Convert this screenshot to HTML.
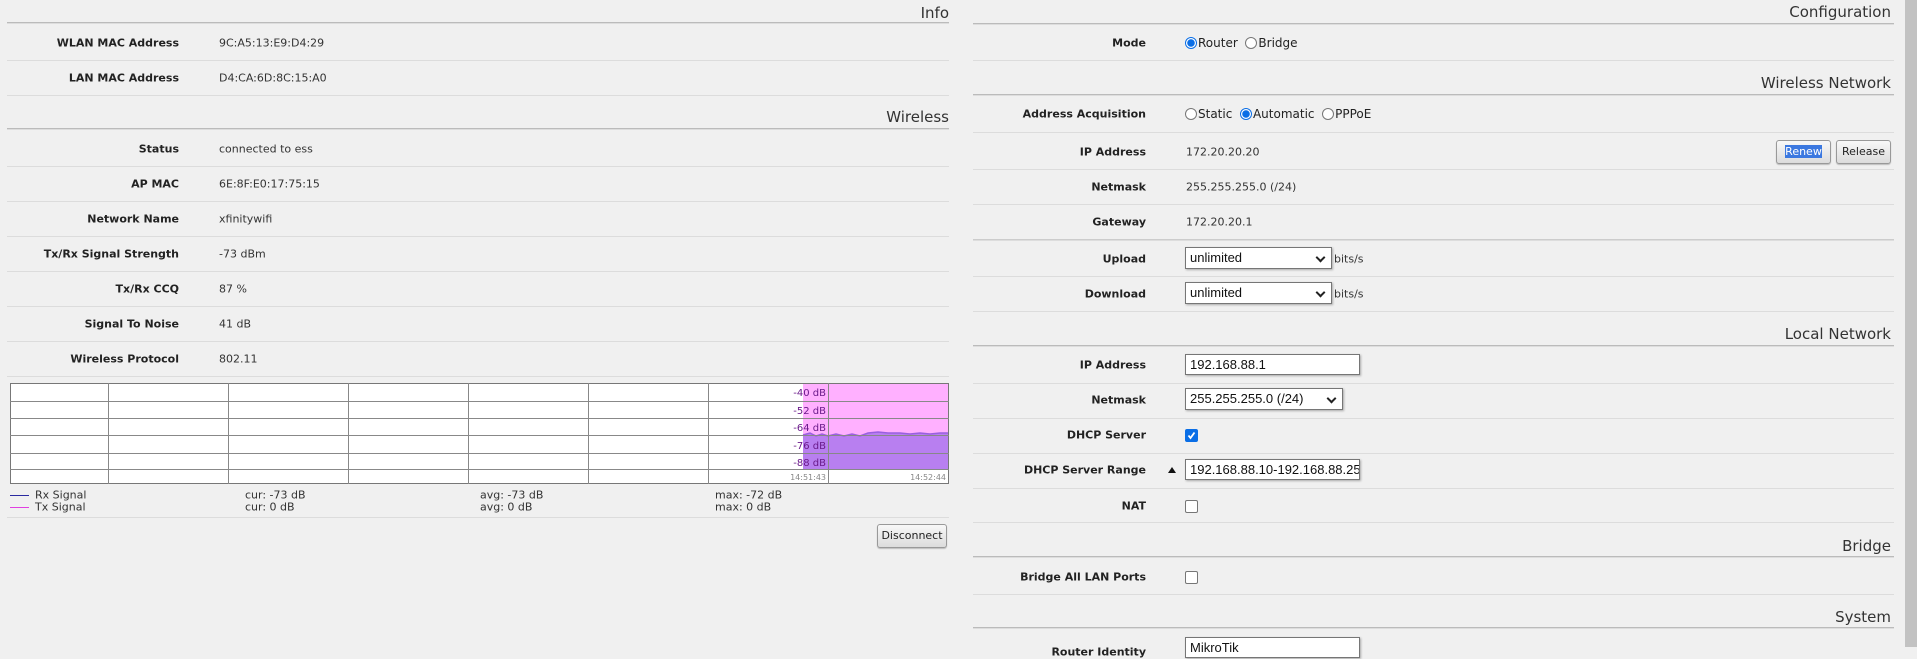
<!DOCTYPE html>
<html><head><meta charset="utf-8"><style>
*{margin:0;padding:0;box-sizing:border-box}
body{width:1917px;height:647px;background:#f0f0f0;position:relative;overflow:hidden;font-family:"DejaVu Sans","Liberation Sans",sans-serif;color:#222}
.a{position:absolute}
.lb{position:absolute;font-weight:bold;font-size:11px;text-align:right;white-space:nowrap;transform:translateY(-50%)}
.v{position:absolute;font-size:11px;white-space:nowrap;transform:translateY(-50%);color:#333}
.h{position:absolute;font-size:15px;text-align:right;white-space:nowrap;transform:translateY(-50%);color:#333}
.hl{position:absolute;height:2px;border-top:1px solid #bbb;border-bottom:1px solid #ddd}
.sl{position:absolute;height:1px;background:#dcdcdc}
.rb{display:inline-block;width:12px;height:12px;border-radius:50%;border:1px solid #777;background:#fff;vertical-align:-2px;margin-right:1px}
.rb.on{border:1px solid #0a6ee6;background:radial-gradient(circle,#0a6ee6 0 3.5px,#fff 4px)}
.opt{position:absolute;font-size:12px;white-space:nowrap;transform:translateY(-50%);color:#222}
.sel,.inp{position:absolute;background:#fff;border:1px solid #767676;box-shadow:1px 1px 2px #aaa;font-family:"Liberation Sans",sans-serif;font-size:13px;padding-left:4px;line-height:20px;color:#111;white-space:nowrap;overflow:hidden}
.sel::after{content:"";position:absolute;right:7px;top:6px;width:5px;height:5px;border-right:2px solid #222;border-bottom:2px solid #222;transform:rotate(45deg)}
.cb{position:absolute;width:13px;height:13px;border:1px solid #767676;border-radius:2px;background:#fff}
.btn{position:absolute;border:1px solid #999;border-radius:3px;background:linear-gradient(#f8f8f8,#dcdcdc);font-size:11px;text-align:center;color:#222;box-shadow:0 1px 1px #bbb}
</style></head><body>
<div class="h" style="right:968px;top:13px">Info</div>
<div class="hl" style="left:7px;width:942px;top:22px"></div>
<div class="lb" style="right:1738px;top:43px">WLAN MAC Address</div><div class="v" style="left:219px;top:43px">9C:A5:13:E9:D4:29</div>
<div class="sl" style="left:7px;width:942px;top:60px"></div>
<div class="lb" style="right:1738px;top:78px">LAN MAC Address</div><div class="v" style="left:219px;top:78px">D4:CA:6D:8C:15:A0</div>
<div class="sl" style="left:7px;width:942px;top:95px"></div>
<div class="h" style="right:968px;top:117px">Wireless</div>
<div class="hl" style="left:7px;width:942px;top:128px"></div>
<div class="lb" style="right:1738px;top:149px">Status</div><div class="v" style="left:219px;top:149px">connected to ess</div>
<div class="sl" style="left:7px;width:942px;top:166px"></div>
<div class="lb" style="right:1738px;top:184px">AP MAC</div><div class="v" style="left:219px;top:184px">6E:8F:E0:17:75:15</div>
<div class="sl" style="left:7px;width:942px;top:201px"></div>
<div class="lb" style="right:1738px;top:219px">Network Name</div><div class="v" style="left:219px;top:219px">xfinitywifi</div>
<div class="sl" style="left:7px;width:942px;top:236px"></div>
<div class="lb" style="right:1738px;top:254px">Tx/Rx Signal Strength</div><div class="v" style="left:219px;top:254px">-73 dBm</div>
<div class="sl" style="left:7px;width:942px;top:271px"></div>
<div class="lb" style="right:1738px;top:289px">Tx/Rx CCQ</div><div class="v" style="left:219px;top:289px">87 %</div>
<div class="sl" style="left:7px;width:942px;top:306px"></div>
<div class="lb" style="right:1738px;top:324px">Signal To Noise</div><div class="v" style="left:219px;top:324px">41 dB</div>
<div class="sl" style="left:7px;width:942px;top:341px"></div>
<div class="lb" style="right:1738px;top:359px">Wireless Protocol</div><div class="v" style="left:219px;top:359px">802.11</div>
<div class="sl" style="left:7px;width:942px;top:376px"></div>
<svg class="a" style="left:10px;top:383px" width="940" height="102" viewBox="0 0 940 102">
<rect x="0.5" y="0.5" width="938" height="100" fill="#fff" stroke="#777"/>
<rect x="793" y="1" width="145" height="85" fill="#ffb0ff"/>
<path d="M793 87 L793 52 L800 50 L806 53 L812 51 L818 53 L826 51 L834 53 L842 51 L850 53 L858 50 L868 49 L878 50 L890 50 L900 51 L910 50 L920 51 L930 50 L938 50 L938 87 Z" fill="#b87ff0"/>
<path d="M793 52 L800 50 L806 53 L812 51 L818 53 L826 51 L834 53 L842 51 L850 53 L858 50 L868 49 L878 50 L890 50 L900 51 L910 50 L920 51 L930 50 L938 50" fill="none" stroke="#9a5fe0" stroke-width="1.5"/>
<g stroke="#888" stroke-width="1">
<line x1="0" y1="18.5" x2="939" y2="18.5"/><line x1="0" y1="35.5" x2="939" y2="35.5"/><line x1="0" y1="52.5" x2="939" y2="52.5"/><line x1="0" y1="70.5" x2="939" y2="70.5"/><line x1="0" y1="86.5" x2="939" y2="86.5"/>
<line x1="98.5" y1="0" x2="98.5" y2="101"/><line x1="218.5" y1="0" x2="218.5" y2="101"/><line x1="338.5" y1="0" x2="338.5" y2="101"/><line x1="458.5" y1="0" x2="458.5" y2="101"/><line x1="578.5" y1="0" x2="578.5" y2="101"/><line x1="698.5" y1="0" x2="698.5" y2="101"/><line x1="818.5" y1="0" x2="818.5" y2="101"/>
</g>
<g font-family="DejaVu Sans,sans-serif" font-size="10" fill="#6a1a8a" text-anchor="end">
<text x="816" y="13">-40 dB</text><text x="816" y="31">-52 dB</text><text x="816" y="48">-64 dB</text><text x="816" y="66">-76 dB</text><text x="816" y="83">-88 dB</text>
</g>
<g font-family="DejaVu Sans,sans-serif" font-size="8" fill="#888" text-anchor="end"><text x="816" y="97">14:51:43</text><text x="936" y="97">14:52:44</text></g>
</svg>
<div class="a" style="left:10px;top:495px;width:19px;height:1px;background:#2a2aa0"></div>
<div class="a" style="left:10px;top:507px;width:19px;height:1px;background:#e040e0"></div>
<div class="v" style="left:35px;top:495px">Rx Signal</div><div class="v" style="left:35px;top:507px">Tx Signal</div>
<div class="v" style="left:245px;top:495px">cur: -73 dB</div><div class="v" style="left:245px;top:507px">cur: 0 dB</div>
<div class="v" style="left:480px;top:495px">avg: -73 dB</div><div class="v" style="left:480px;top:507px">avg: 0 dB</div>
<div class="v" style="left:715px;top:495px">max: -72 dB</div><div class="v" style="left:715px;top:507px">max: 0 dB</div>
<div class="sl" style="left:7px;width:942px;top:517px"></div>
<div class="btn" style="left:877px;top:524px;width:70px;height:24px;line-height:22px">Disconnect</div>

<div class="h" style="right:26px;top:12px">Configuration</div>
<div class="hl" style="left:973px;width:921px;top:23px"></div>
<div class="lb" style="right:771px;top:43px">Mode</div>
<div class="opt" style="left:1185px;top:43px"><span class="rb on"></span>Router&nbsp; <span class="rb"></span>Bridge</div>
<div class="sl" style="left:973px;width:921px;top:60px"></div>
<div class="h" style="right:26px;top:83px">Wireless Network</div>
<div class="hl" style="left:973px;width:921px;top:94px"></div>
<div class="lb" style="right:771px;top:114px">Address Acquisition</div>
<div class="opt" style="left:1185px;top:114px"><span class="rb"></span>Static&nbsp; <span class="rb on"></span>Automatic&nbsp; <span class="rb"></span>PPPoE</div>
<div class="sl" style="left:973px;width:921px;top:132px"></div>
<div class="lb" style="right:771px;top:152px">IP Address</div><div class="v" style="left:1186px;top:152px">172.20.20.20</div>
<div class="btn" style="left:1776px;top:140px;width:55px;height:24px;line-height:22px"><span style="background:#3b78e0;color:#fff">Renew</span></div>
<div class="btn" style="left:1836px;top:140px;width:55px;height:24px;line-height:22px">Release</div>
<div class="sl" style="left:973px;width:921px;top:169px"></div>
<div class="lb" style="right:771px;top:187px">Netmask</div><div class="v" style="left:1186px;top:187px">255.255.255.0 (/24)</div>
<div class="sl" style="left:973px;width:921px;top:204px"></div>
<div class="lb" style="right:771px;top:222px">Gateway</div><div class="v" style="left:1186px;top:222px">172.20.20.1</div>
<div class="hl" style="left:973px;width:921px;top:239px;border-top-color:#ccc"></div>
<div class="lb" style="right:771px;top:259px">Upload</div>
<div class="sel" style="left:1185px;top:247px;width:147px;height:22px">unlimited</div><div class="v" style="left:1334px;top:259px">bits/s</div>
<div class="sl" style="left:973px;width:921px;top:276px"></div>
<div class="lb" style="right:771px;top:294px">Download</div>
<div class="sel" style="left:1185px;top:282px;width:147px;height:22px">unlimited</div><div class="v" style="left:1334px;top:294px">bits/s</div>
<div class="sl" style="left:973px;width:921px;top:311px"></div>
<div class="h" style="right:26px;top:334px">Local Network</div>
<div class="hl" style="left:973px;width:921px;top:345px"></div>
<div class="lb" style="right:771px;top:365px">IP Address</div>
<div class="inp" style="left:1185px;top:354px;width:175px;height:21px;line-height:19px">192.168.88.1</div>
<div class="sl" style="left:973px;width:921px;top:383px"></div>
<div class="lb" style="right:771px;top:400px">Netmask</div>
<div class="sel" style="left:1185px;top:388px;width:158px;height:22px">255.255.255.0 (/24)</div>
<div class="sl" style="left:973px;width:921px;top:418px"></div>
<div class="lb" style="right:771px;top:435px">DHCP Server</div>
<div class="cb" style="left:1185px;top:429px;background:#0a6ee6;border-color:#0a6ee6"><svg width="11" height="11" viewBox="0 0 11 11" style="position:absolute;left:0;top:0"><path d="M2.5 5.5 L4.5 8 L8.5 2.5" fill="none" stroke="#fff" stroke-width="1.8"/></svg></div>
<div class="sl" style="left:973px;width:921px;top:453px"></div>
<div class="lb" style="right:771px;top:470px">DHCP Server Range</div>
<div class="a" style="left:1168px;top:467px;width:0;height:0;border-left:4px solid transparent;border-right:4px solid transparent;border-bottom:6px solid #111"></div>
<div class="inp" style="left:1185px;top:459px;width:175px;height:21px;line-height:19px">192.168.88.10-192.168.88.254</div>
<div class="sl" style="left:973px;width:921px;top:488px"></div>
<div class="lb" style="right:771px;top:506px">NAT</div>
<div class="cb" style="left:1185px;top:500px"></div>
<div class="sl" style="left:973px;width:921px;top:522px"></div>
<div class="h" style="right:26px;top:546px">Bridge</div>
<div class="hl" style="left:973px;width:921px;top:556px"></div>
<div class="lb" style="right:771px;top:577px">Bridge All LAN Ports</div>
<div class="cb" style="left:1185px;top:571px"></div>
<div class="sl" style="left:973px;width:921px;top:594px"></div>
<div class="h" style="right:26px;top:617px">System</div>
<div class="hl" style="left:973px;width:921px;top:627px"></div>
<div class="lb" style="right:771px;top:652px">Router Identity</div>
<div class="inp" style="left:1185px;top:637px;width:175px;height:21px;line-height:19px">MikroTik</div>
<div class="a" style="left:1905px;top:0;width:12px;height:647px;background:#c2c2c2"></div>
</body></html>
